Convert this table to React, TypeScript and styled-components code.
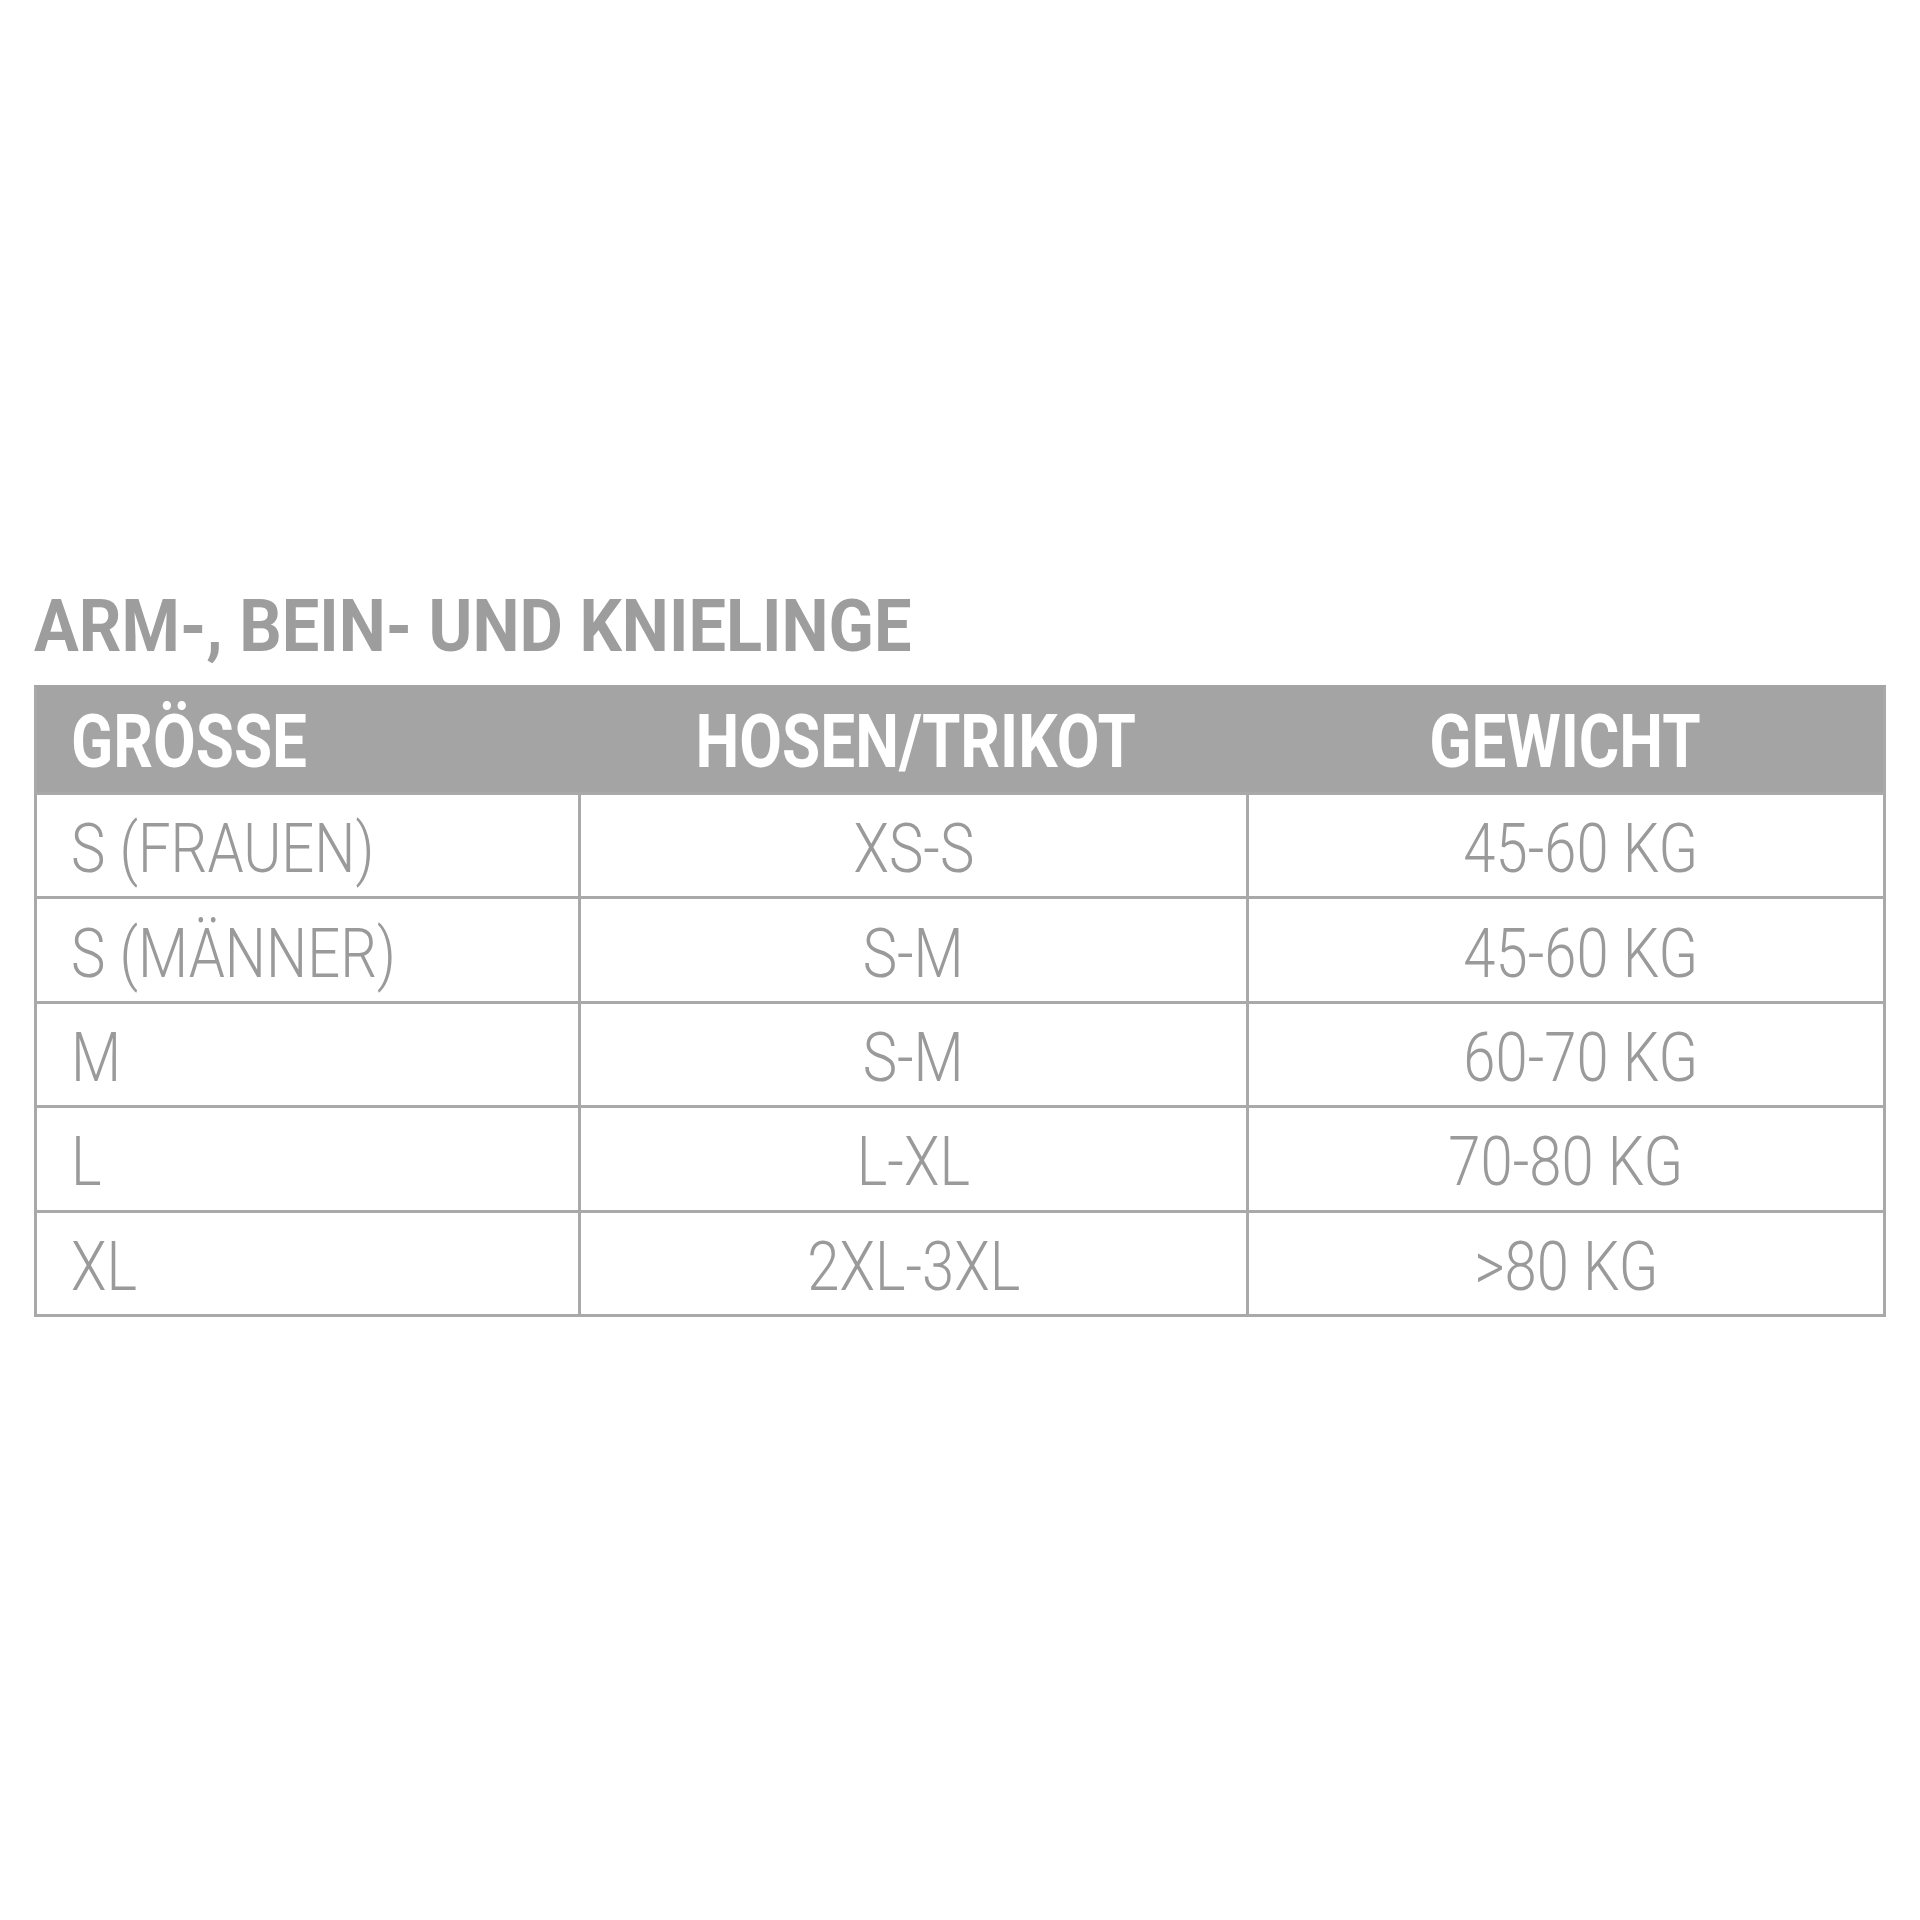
import React from "react";
import styled, { createGlobalStyle } from "styled-components";

const Global = createGlobalStyle`
  html, body {
    margin: 0;
    padding: 0;
    background: #ffffff;
  }
  body {
    font-family: Roboto, "Liberation Sans", Arial, sans-serif;
  }
`;

const Page = styled.main`
  width: 1920px;
  height: 1920px;
  box-sizing: border-box;
  padding: 591px 0 0 34px;
  background: #ffffff;
`;

const Title = styled.h2`
  margin: 0 0 22px 0;
  height: 72px;
  font-family: Roboto, "Liberation Sans", sans-serif;
  font-weight: 700;
  font-size: 72px;
  line-height: 1;
  color: #9d9d9d;
  white-space: nowrap;
`;

const Squeeze = styled.span<{ $scale: number; $origin?: string }>`
  display: inline-block;
  white-space: nowrap;
  transform: scaleX(${(p) => p.$scale});
  transform-origin: ${(p) => p.$origin ?? "left"} center;
`;

const Table = styled.div`
  width: 1852px;
  box-sizing: border-box;
  border: 3px solid #a9a9a9;
  border-top-color: #a4a4a4;
`;

const HeaderRow = styled.div`
  display: grid;
  grid-template-columns: 541px 668px 637px;
  height: 104px;
  background: #a4a4a4;
`;

const HeadCell = styled.div<{ $align: "left" | "center"; $shift?: number }>`
  display: flex;
  align-items: center;
  justify-content: ${(p) => (p.$align === "left" ? "flex-start" : "center")};
  padding-left: ${(p) => (p.$align === "left" ? 34 : p.$shift ?? 0)}px;
  padding-top: 3px;
  font-family: Roboto, "Liberation Sans", sans-serif;
  font-weight: 700;
  font-size: 74px;
  line-height: 1;
  color: #ffffff;
`;

const Row = styled.div`
  display: grid;
  grid-template-columns: 541px 668px 637px;
  height: 104.4px;
  box-sizing: border-box;
  border-top: 3px solid #a9a9a9;
`;

const Cell = styled.div<{ $align: "left" | "center"; $divider?: boolean; $shift?: number }>`
  display: flex;
  align-items: center;
  justify-content: ${(p) => (p.$align === "left" ? "flex-start" : "center")};
  padding-left: ${(p) => (p.$align === "left" ? 34 : p.$shift ?? 0)}px;
  padding-top: 6px;
  box-sizing: border-box;
  border-left: ${(p) => (p.$divider ? "3px solid #a9a9a9" : "none")};
  font-family: Roboto, "Liberation Sans", sans-serif;
  font-weight: 300;
  font-size: 69px;
  line-height: 1;
  color: #9a9a9a;
`;

const rows: { size: string; hosen: string; weight: string; shift: number }[] = [
  { size: "S (FRAUEN)", hosen: "XS-S", weight: "45-60 KG", shift: 30 },
  { size: "S (MÄNNER)", hosen: "S-M", weight: "45-60 KG", shift: 30 },
  { size: "M", hosen: "S-M", weight: "60-70 KG", shift: 30 },
  { size: "L", hosen: "L-XL", weight: "70-80 KG", shift: 0 },
  { size: "XL", hosen: "2XL-3XL", weight: ">80 KG", shift: 0 },
];

const HEAD_SCALE = 0.838;
const BODY_SCALE = 0.84;

export default function App() {
  return (
    <>
      <Global />
      <Page>
        <Title>
          <Squeeze $scale={0.926}>ARM-, BEIN- UND KNIELINGE</Squeeze>
        </Title>
        <Table>
          <HeaderRow>
            <HeadCell $align="left">
              <Squeeze $scale={HEAD_SCALE}>GRÖSSE</Squeeze>
            </HeadCell>
            <HeadCell $align="center" $shift={8}>
              <Squeeze $scale={HEAD_SCALE} $origin="center">HOSEN/TRIKOT</Squeeze>
            </HeadCell>
            <HeadCell $align="center">
              <Squeeze $scale={HEAD_SCALE} $origin="center">GEWICHT</Squeeze>
            </HeadCell>
          </HeaderRow>
          {rows.map((r) => (
            <Row key={r.size}>
              <Cell $align="left">
                <Squeeze $scale={BODY_SCALE}>{r.size}</Squeeze>
              </Cell>
              <Cell $align="center" $divider>
                <Squeeze $scale={BODY_SCALE} $origin="center">{r.hosen}</Squeeze>
              </Cell>
              <Cell $align="center" $divider $shift={r.shift}>
                <Squeeze $scale={BODY_SCALE} $origin="center">{r.weight}</Squeeze>
              </Cell>
            </Row>
          ))}
        </Table>
      </Page>
    </>
  );
}
